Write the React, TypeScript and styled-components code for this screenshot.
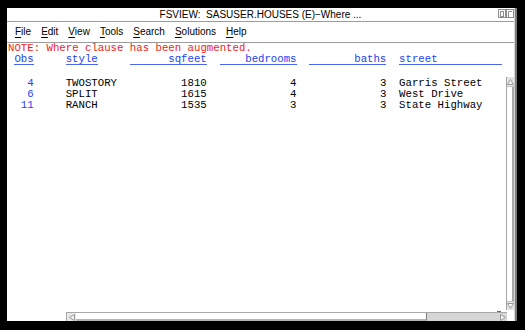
import React from "react";
import styled, { createGlobalStyle } from "styled-components";

const GlobalStyle = createGlobalStyle`
  html, body {
    margin: 0;
    padding: 0;
    background: #000;
  }
  body {
    width: 525px;
    height: 330px;
    overflow: hidden;
  }
`;

const Screen = styled.div`
  width: 525px;
  height: 330px;
  box-sizing: border-box;
  padding: 8px 0 0 7px;
  background: #000;
`;

const Window = styled.div`
  width: 508px;
  height: 313px;
  box-sizing: border-box;
  background: #fff;
  border-right: 1px solid #d4d4d4;
  box-shadow: 2px 0 0 #7c7c7c;
  display: flex;
  flex-direction: column;
`;

const TitleBar = styled.div`
  height: 13px;
  border-bottom: 1px solid #9c9c9c;
  display: grid;
  grid-template-columns: 1fr auto 1fr;
  align-items: center;
  font: 10px/13px "Liberation Sans", Arial, sans-serif;
  color: #000;
`;

const Title = styled.div`
  grid-column: 2;
  white-space: pre;
`;

const TitleButtons = styled.div`
  justify-self: end;
  display: flex;
  height: 13px;
  align-items: flex-start;
  padding-top: 1px;
  box-sizing: border-box;
`;

const MenuBar = styled.div`
  height: 20px;
  border-bottom: 1px solid #9c9c9c;
  display: flex;
  gap: 10px;
  padding-left: 8px;
  font: 10px/20px "Liberation Sans", Arial, sans-serif;
  color: #000;
`;

const MenuItem = styled.span`
  &::first-letter {
    text-decoration: underline;
    text-underline-offset: 2px;
  }
`;

const Content = styled.div`
  flex: 1;
  display: flex;
  flex-direction: column;
  padding-left: 1px;
  font-family: "Liberation Mono", "Courier New", monospace;
  font-size: 10.7px;
  min-height: 0;
`;

const NoteLine = styled.div`
  height: 11px;
  line-height: 11px;
  color: #f01c1c;
  white-space: pre;
`;

const Row = styled.div`
  display: flex;
  height: 11px;
  line-height: 11px;
  white-space: pre;
  color: #000;
`;

const Cell = styled.div<{ $w: number; $ml: number; $right?: boolean; $blue?: boolean }>`
  width: ${(p) => p.$w}ch;
  margin-left: ${(p) => p.$ml}ch;
  text-align: ${(p) => (p.$right ? "right" : "left")};
  color: ${(p) => (p.$blue ? "#2242f2" : "inherit")};
`;

const HeadCell = styled.div<{ $w: number; $ml: number; $line: number; $right?: boolean }>`
  width: ${(p) => p.$w}ch;
  margin-left: ${(p) => p.$ml}ch;
  text-align: ${(p) => (p.$right ? "right" : "left")};
  color: #2242f2;
  height: 11px;
  position: relative;

  &::after {
    content: "";
    position: absolute;
    left: 0;
    top: 10px;
    width: ${(p) => p.$line}ch;
    height: 1px;
    background: #4a66f2;
  }
`;

const Body = styled.div`
  flex: 1;
  display: flex;
  margin-top: 12px;
  min-height: 0;
  position: relative;
`;

const Rows = styled.div`
  flex: 1;
  padding-top: 1px;
`;

const VScroll = styled.div`
  width: 8px;
  margin-bottom: 2px;
  display: flex;
  flex-direction: column;
  border-left: 1px solid #a4a4a4;
  box-sizing: border-box;
  background: #fff;
`;

const VThumb = styled.div`
  flex: 1;
  border-right: 2px solid #a8a8a8;
  border-top: 1px solid #c4c4c4;
  border-bottom: 1px solid #c4c4c4;
`;

const ArrowBox = styled.div<{ $w: number; $h: number; $bg?: string }>`
  width: ${(p) => p.$w}px;
  height: ${(p) => p.$h}px;
  flex: none;
  display: flex;
  align-items: center;
  justify-content: center;
  background: ${(p) => p.$bg ?? "#e4e4e4"};
`;

const Grip = styled.div`
  position: absolute;
  right: 13px;
  bottom: 0;
  width: 4px;
  height: 1px;
  background: #6c6c6c;
`;

const BottomRow = styled.div`
  height: 9px;
  display: flex;
  flex: none;
`;

const HSpacer = styled.div`
  width: 58px;
`;

const HScroll = styled.div`
  width: 441px;
  display: flex;
  box-sizing: border-box;
  border-top: 1px solid #a8a8a8;
  border-left: 1px solid #a8a8a8;
  background: #d8d8d8;
`;

const HThumb = styled.div`
  width: 351px;
  background: #fff;
  border-bottom: 2px solid #b4b4b4;
  border-right: 1px solid #7c7c7c;
  box-sizing: border-box;
`;

const HTrack = styled.div`
  flex: 1;
  background: #d6d6d6;
`;

const Corner = styled.div`
  flex: 1;
  background: #fff;
`;

type Dir = "left" | "right" | "up" | "down";

const Tri = ({ dir }: { dir: Dir }) => {
  const pts: Record<Dir, string> = {
    left: "0.5,3.5 5.5,0.5 5.5,6.5",
    right: "5.5,3.5 0.5,0.5 0.5,6.5",
    up: "3.5,0.5 0.5,5.5 6.5,5.5",
    down: "3.5,5.5 0.5,0.5 6.5,0.5",
  };
  const w = dir === "left" || dir === "right" ? 6 : 7;
  const h = dir === "left" || dir === "right" ? 7 : 6;
  return (
    <svg width={w} height={h} viewBox={`0 0 ${w} ${h}`}>
      <polygon points={pts[dir]} fill="#f4f4f4" stroke="#9a9a9a" strokeWidth="1" />
    </svg>
  );
};

const RestoreIcon = () => (
  <svg width="8" height="9" viewBox="0 0 8 9">
    <rect x="0.5" y="0.5" width="7" height="8" fill="none" stroke="#8c8c8c" />
    <rect x="2.5" y="2.5" width="3" height="5" fill="none" stroke="#8c8c8c" />
  </svg>
);

const MaxIcon = () => (
  <svg width="8" height="9" viewBox="0 0 8 9">
    <rect x="0.5" y="0.5" width="7" height="8" fill="none" stroke="#8c8c8c" />
    <path d="M2.5 8 V2.5 H6" fill="none" stroke="#8c8c8c" />
  </svg>
);

const columns = [
  { key: "obs", label: "Obs", w: 3, ml: 1, right: true, line: 3 },
  { key: "style", label: "style", w: 8, ml: 5, right: false, line: 5 },
  { key: "sqfeet", label: "sqfeet", w: 12, ml: 2, right: true, line: 12 },
  { key: "bedrooms", label: "bedrooms", w: 12, ml: 2, right: true, line: 12 },
  { key: "baths", label: "baths", w: 12, ml: 2, right: true, line: 12 },
  { key: "street", label: "street", w: 16, ml: 2, right: false, line: 16 },
];

const houses = [
  { obs: "4", style: "TWOSTORY", sqfeet: "1810", bedrooms: "4", baths: "3", street: "Garris Street" },
  { obs: "6", style: "SPLIT", sqfeet: "1615", bedrooms: "4", baths: "3", street: "West Drive" },
  { obs: "11", style: "RANCH", sqfeet: "1535", bedrooms: "3", baths: "3", street: "State Highway" },
];

const menus = ["File", "Edit", "View", "Tools", "Search", "Solutions", "Help"];

const App = () => {
  return (
    <>
      <GlobalStyle />
      <Screen>
        <Window>
          <TitleBar>
            <Title>FSVIEW:  SASUSER.HOUSES (E)−Where ...</Title>
            <TitleButtons>
              <RestoreIcon />
              <MaxIcon />
            </TitleButtons>
          </TitleBar>
          <MenuBar>
            {menus.map((m) => (
              <MenuItem key={m}>{m}</MenuItem>
            ))}
          </MenuBar>
          <Content>
            <NoteLine>NOTE: Where clause has been augmented.</NoteLine>
            <Row>
              {columns.map((c) => (
                <HeadCell key={c.key} $w={c.w} $ml={c.ml} $right={c.right} $line={c.line}>
                  {c.label}
                </HeadCell>
              ))}
            </Row>
            <Body>
              <Rows>
                {houses.map((h) => (
                  <Row key={h.obs}>
                    {columns.map((c) => (
                      <Cell key={c.key} $w={c.w} $ml={c.ml} $right={c.right} $blue={c.key === "obs"}>
                        {h[c.key as keyof typeof h]}
                      </Cell>
                    ))}
                  </Row>
                ))}
              </Rows>
              <VScroll>
                <ArrowBox $w={7} $h={9}>
                  <Tri dir="up" />
                </ArrowBox>
                <VThumb />
                <ArrowBox $w={7} $h={8}>
                  <Tri dir="down" />
                </ArrowBox>
              </VScroll>
              <Grip />
            </Body>
            <BottomRow>
              <HSpacer />
              <HScroll>
                <ArrowBox $w={9} $h={8} $bg="#e8e8e8">
                  <Tri dir="left" />
                </ArrowBox>
                <HThumb />
                <HTrack />
                <ArrowBox $w={8} $h={8} $bg="#d6d6d6">
                  <Tri dir="right" />
                </ArrowBox>
              </HScroll>
              <Corner />
            </BottomRow>
          </Content>
        </Window>
      </Screen>
    </>
  );
};

export default App;
